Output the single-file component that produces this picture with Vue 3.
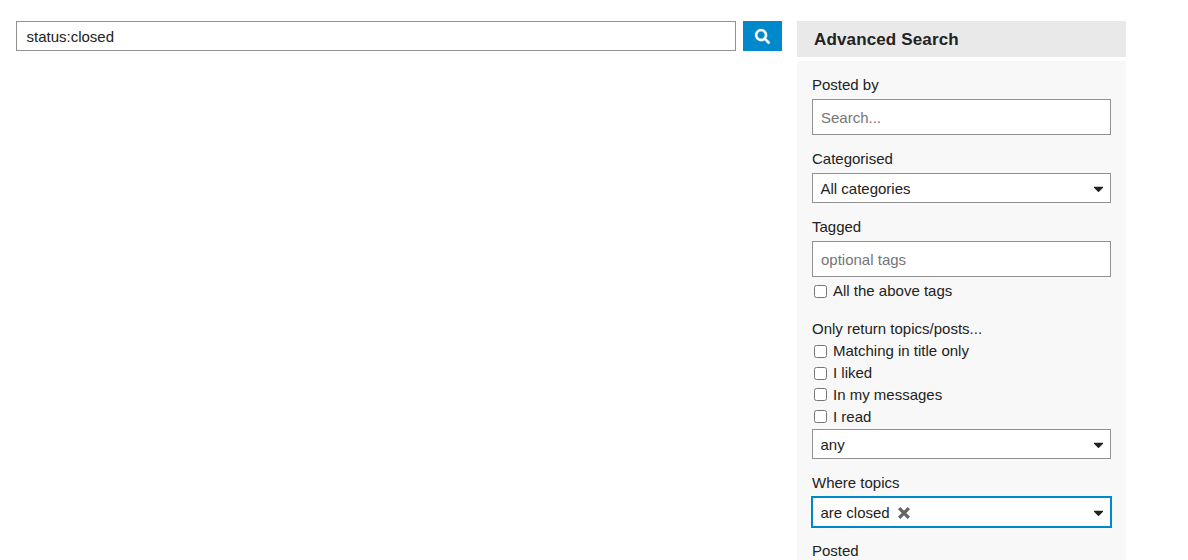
<script setup>
const checks = ['Matching in title only', 'I liked', 'In my messages', 'I read']
</script>

<template>
  <main class="page">
    <div class="search-bar">
      <div class="query">status:closed</div>
      <button class="go" aria-label="Search">
        <svg viewBox="0 0 512 512" width="15" height="15"><path fill="#fff" stroke="#fff" stroke-width="8" d="M505 442.700 405.300 343c-4.500-4.500-10.600-7-17-7H372c27.600-35.300 44-79.700 44-128C416 93.100 322.900 0 208 0S0 93.100 0 208s93.100 208 208 208c48.300 0 92.700-16.400 128-44v16.300c0 6.400 2.500 12.500 7 17l99.700 99.700c9.400 9.400 24.600 9.400 33.900 0l28.300-28.300c9.400-9.400 9.400-24.600.1-34zM208 336c-70.700 0-128-57.200-128-128 0-70.700 57.200-128 128-128 70.700 0 128 57.200 128 128 0 70.700-57.200 128-128 128z" /></svg>
      </button>
    </div>
    <aside class="advanced">
      <h2>Advanced Search</h2>
      <div class="filters">
        <section class="group">
          <div class="label">Posted by</div>
          <div class="field hint">Search...</div>
        </section>
        <section class="group">
          <div class="label">Categorised</div>
          <div class="select">All categories<svg class="caret" viewBox="0 0 9 6"><path d="M0 .7h9v1L5 5.800q-.5.400-1 0L0 1.700z" /></svg></div>
        </section>
        <section class="group tags">
          <div class="label">Tagged</div>
          <div class="field hint">optional tags</div>
          <div class="check first"><i class="box"></i>All the above tags</div>
        </section>
        <section class="group">
          <div class="label tight">Only return topics/posts...</div>
          <div v-for="(c, i) in checks" :key="c" class="check"><i class="box" :class="{ raised: i > 1 }"></i>{{ c }}</div>
          <div class="select any">any<svg class="caret" viewBox="0 0 9 6"><path d="M0 .7h9v1L5 5.800q-.5.400-1 0L0 1.700z" /></svg></div>
        </section>
        <section class="group">
          <div class="label">Where topics</div>
          <div class="select focused">are closed<svg class="clear" viewBox="0 0 12 12"><path d="M1.200 1.200l9.600 9.600M10.800 1.200l-9.600 9.600" /></svg><svg class="caret" viewBox="0 0 9 6"><path d="M0 .7h9v1L5 5.800q-.5.400-1 0L0 1.700z" /></svg></div>
        </section>
        <section class="group">
          <div class="label">Posted</div>
        </section>
      </div>
    </aside>
  </main>
</template>

<style>
body { background: #fff; overflow: hidden; }
</style>

<style scoped>
* { box-sizing: border-box; }
.page { display: flex; height: 560px; overflow: hidden; padding: 21px 0 0 16px; font: 15px/22px "Liberation Sans", Arial, sans-serif; color: #222; }
.search-bar { display: flex; gap: 7px; width: 766px; height: 30px; margin-right: 15px; }
.query { width: 720px; height: 30px; border: 1px solid #919191; padding: 4px 9.500px; }
.go { display: flex; align-items: center; justify-content: center; width: 39px; height: 30px; border: 0; padding: 0; background: #08c; }
.go svg { overflow: visible; }
.advanced { width: 329px; }
h2 { height: 36px; margin: 0 0 4px; padding: 1px 17px 0; background: #e9e9e9; font-size: 17px; line-height: 36px; letter-spacing: .14px; }
.filters { height: 520px; padding: 13px 15px; background: #f8f8f8; }
.group { margin-bottom: 13px; }
.tags { margin-bottom: 16px; }
.label { height: 22px; line-height: 22px; margin-bottom: 3px; }
.tight { margin-bottom: 0; }
.field { height: 36px; border: 1px solid #919191; background: #fff; padding: 0 8px; line-height: 36px; }
.hint { color: #757575; }
.select { display: flex; align-items: center; height: 30px; border: 1px solid #919191; background: #fff; padding: 2px 7px 0 7.500px; }
.caret { width: 9px; height: 6px; margin-left: auto; fill: #222; }
.clear { width: 12px; height: 12px; margin: 0 0 1px 8.500px; stroke: #646464; stroke-width: 3.300; }
.check { display: flex; align-items: center; height: 22px; }
.first { margin-top: 3px; }
.box { width: 13px; height: 13px; margin: 1px 6px 0 2px; border: 1px solid #767676; border-radius: 2.500px; background: #fff; }
.raised { margin-top: -1px; }
.any { margin-top: 1px; }
.focused { margin: -1px; height: 32px; border: 2px solid #08c; }
</style>
